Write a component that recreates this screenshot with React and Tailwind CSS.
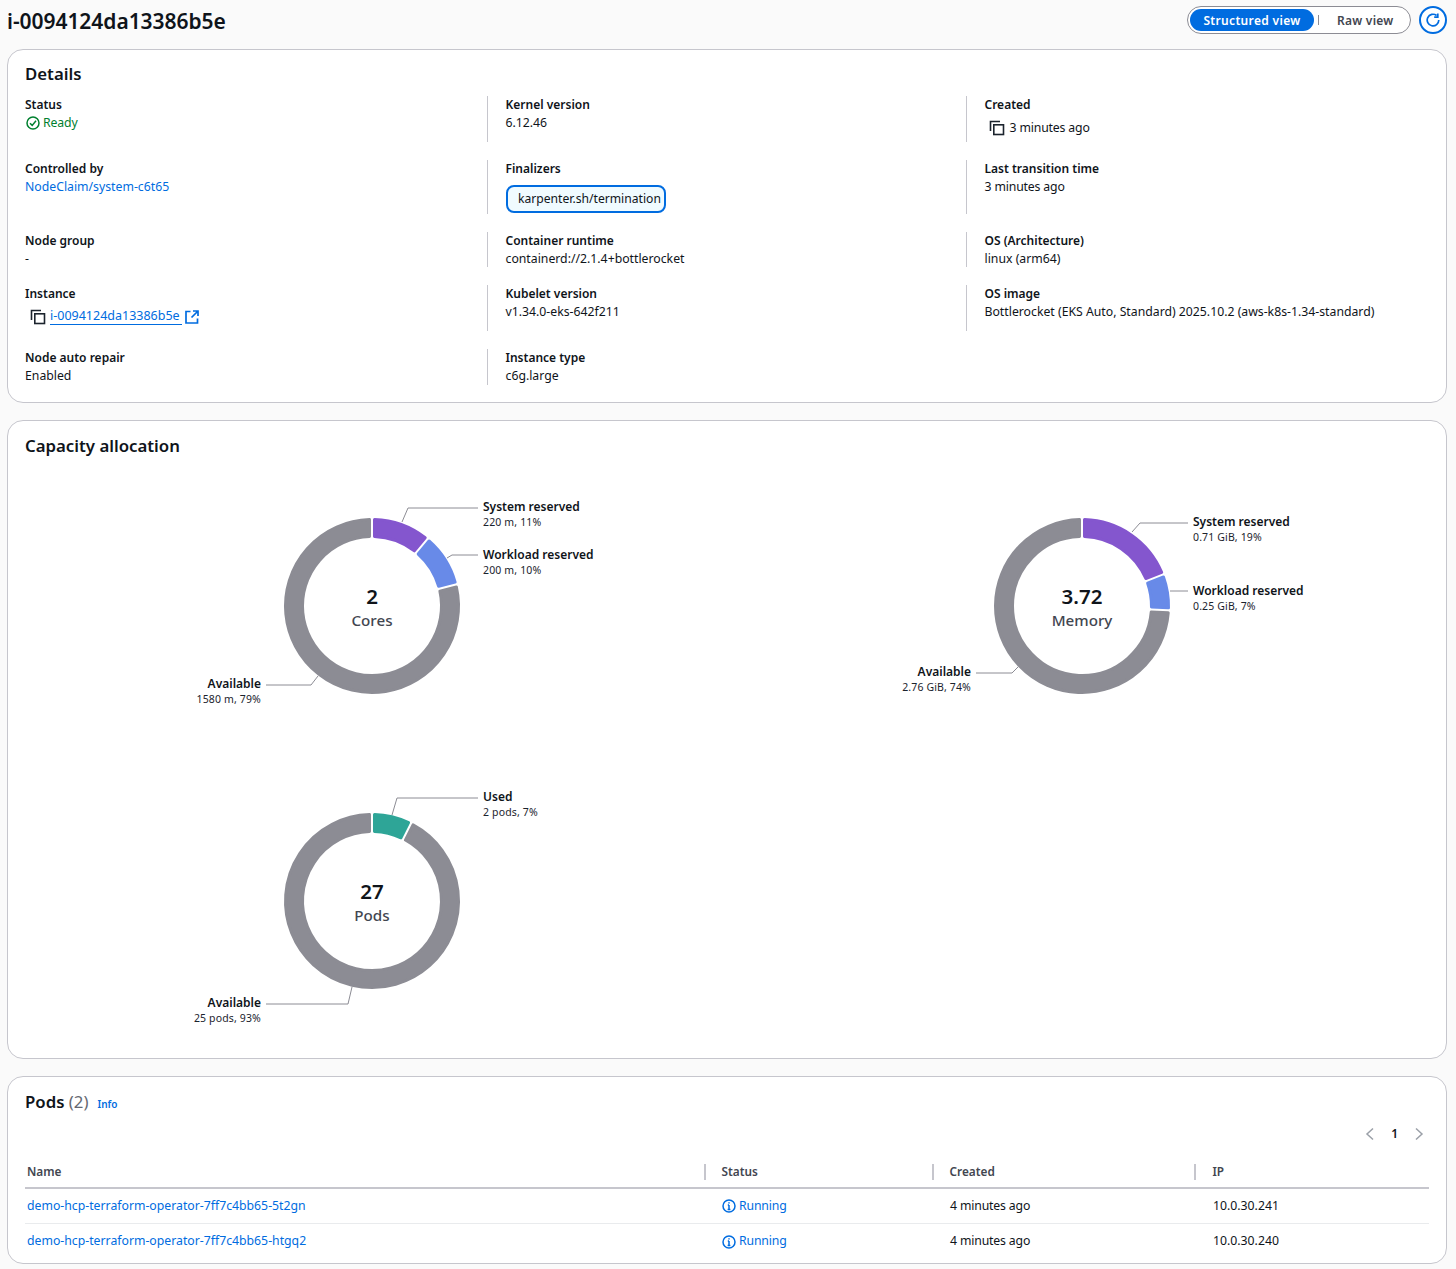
import React from "react";

const BLUE = "#006ce0";

function CopyIcon() {
  return (
    <svg width="16" height="16" viewBox="0 0 16 16" fill="none" stroke="#1b232d" strokeWidth="1.6" className="shrink-0">
      <path d="M1.5 11V1.5H11" />
      <rect x="4.8" y="4.8" width="9.7" height="9.7" />
    </svg>
  );
}
function CheckIcon() {
  return (
    <svg width="14" height="14" viewBox="0 0 14 14" fill="none" stroke="#00802f" strokeWidth="1.5" className="shrink-0">
      <circle cx="7" cy="7" r="6" />
      <path d="M4 7.2l2.2 2.2L10 4.8" />
    </svg>
  );
}
function InfoIcon() {
  return (
    <svg width="14" height="14" viewBox="0 0 14 14" fill="none" stroke={BLUE} strokeWidth="1.5" className="shrink-0">
      <circle cx="7" cy="7" r="6" />
      <path d="M7 6v4.4M5.6 10.4h2.8M5.8 6H7" />
      <path d="M7 3.2v1.4" />
    </svg>
  );
}
function ExternalIcon() {
  return (
    <svg width="14" height="14" viewBox="0 0 14 14" fill="none" stroke={BLUE} strokeWidth="1.7" className="shrink-0">
      <path d="M5.5 1.5H1v11.5h11.5V8.5" />
      <path d="M8 1h5v5M13 1L6.5 7.5" />
    </svg>
  );
}
function RefreshIcon() {
  return (
    <svg width="14" height="14" viewBox="0 0 14 14" fill="none" stroke={BLUE} strokeWidth="1.7">
      <path d="M12.8 7A5.8 5.8 0 1 1 10.6 2.5" />
      <path d="M8.2 4.2h3.6V.6" />
    </svg>
  );
}
function Chevron({ left }) {
  return (
    <svg width="10" height="14" viewBox="0 0 10 14" fill="none" stroke="#9ba0a8" strokeWidth="1.5">
      <path d={left ? "M8 1.5L2 7l6 5.5" : "M2 1.5L8 7l-6 5.5"} />
    </svg>
  );
}

function Label({ children }) {
  return <div className="pt-px text-[12px] leading-4 font-semibold text-[#0f141a]">{children}</div>;
}
function Value({ children, className = "" }) {
  return <div className={`text-[12.25px] leading-5 text-[#0f141a] ${className}`}>{children}</div>;
}
function Cell({ divider, children }) {
  return <div className={divider ? "border-l border-[#c6c6cd] pl-[17.5px]" : ""}>{children}</div>;
}

function Card({ className, children }) {
  return <section className={`rounded-2xl border border-[#c6c6cd] bg-white ${className}`}>{children}</section>;
}

function sector(r0, r1, startFrac, endFrac, gap) {
  const pts = (r, a) => {
    const rad = a - Math.PI / 2;
    return `${(r * Math.cos(rad)).toFixed(2)} ${(r * Math.sin(rad)).toFixed(2)}`;
  };
  const a0 = startFrac * 2 * Math.PI;
  const a1 = endFrac * 2 * Math.PI;
  const large = endFrac - startFrac > 0.5 ? 1 : 0;
  return [
    `M${pts(r1, a0 + gap / r1)}`,
    `A${r1} ${r1} 0 ${large} 1 ${pts(r1, a1 - gap / r1)}`,
    `L${pts(r0, a1 - gap / r0)}`,
    `A${r0} ${r0} 0 ${large} 0 ${pts(r0, a0 + gap / r0)}`,
    "Z",
  ].join(" ");
}

function Donut({ segments, labels, value, unit }) {
  let acc = 0;
  return (
    <svg viewBox="-347 -140 694 279" className="h-[279px] w-[694px]" style={{ fontFamily: "'Noto Sans', sans-serif" }}>
      {segments.map((s, i) => {
        const start = acc;
        acc += s.frac;
        return (
          <path
            key={i}
            d={sector(69.5, 86.5, start, acc, 2.5)}
            fill={s.color}
            stroke={s.color}
            strokeWidth="3"
            strokeLinejoin="round"
          />
        );
      })}
      {labels.map((l, i) => (
        <g key={i}>
          <polyline points={l.line} fill="none" stroke="#8c8c94" strokeWidth="1" />
          <text x={l.x} y={l.y} textAnchor={l.anchor} className="fill-[#0f141a] text-[12px] font-semibold">
            {l.title}
          </text>
          <text x={l.x} y={l.y + 15} textAnchor={l.anchor} className="fill-[#1b232d] text-[10.5px] tracking-[0.15px]">
            {l.sub}
          </text>
        </g>
      ))}
      <text x="0" y="-2" textAnchor="middle" className="fill-[#0f141a] text-[20.5px] font-semibold">
        {value}
      </text>
      <text x="0" y="20" textAnchor="middle" className="fill-[#424650] text-[15.2px] font-medium">
        {unit}
      </text>
    </svg>
  );
}

const GRAY = "#8c8c94";
const PURPLE = "#8456ce";
const PERI = "#688ae8";
const TEAL = "#2ea597";

const Link = ({ children, className = "" }) => <span className={`text-[#006ce0] ${className}`}>{children}</span>;

function TH({ children, divider, className = "pl-[16px]" }) {
  return (
    <div className={`flex h-[16px] items-center text-[11.8px] font-semibold text-[#424650] ${divider ? `border-l-2 border-[#c6c6cd] ${className}` : "pl-[2px]"}`}>
      {children}
    </div>
  );
}

function Row({ name, ip, last }) {
  return (
    <div className={`grid h-[35px] grid-cols-[678.5px_228px_262px_1fr] items-center text-[12.25px] text-[#0f141a] ${last ? "" : "border-b border-[#e9ebed]"}`}>
      <div className="pl-[2px]"><Link>{name}</Link></div>
      <div className="flex items-center gap-[3px] pl-[18.5px]"><InfoIcon /><Link className="tracking-[-0.15px]">Running</Link></div>
      <div className="pl-[18.5px] tracking-[-0.15px]">4 minutes ago</div>
      <div className="pl-[19.5px]">{ip}</div>
    </div>
  );
}

export default function App() {
  return (
    <div className="min-h-[1269px] bg-[#fafafa] pl-[7px] pr-[9px]" style={{ fontFamily: "'Noto Sans', sans-serif" }}>
      <header className="flex h-[49px] items-start justify-between">
        <h1 className="pt-[5px] text-[21px] leading-[32px] font-semibold tracking-[-0.05px] text-[#0f141a]">i-0094124da13386b5e</h1>
        <div className="mt-[6px] flex items-center gap-2">
          <div className="flex h-[28px] w-[224px] items-center rounded-full border border-[#8c8c94] bg-white pl-[2px]">
            <div className="flex h-[22px] w-[124px] items-center justify-center rounded-full bg-[#006ce0] pt-px text-[12px] font-semibold tracking-[0.33px] text-white">Structured view</div>
            <div className="ml-[4px] h-[10px] w-px bg-[#8c8c94]" />
            <div className="ml-[18px] pt-px text-[12px] font-semibold tracking-[0.25px] text-[#424650]">Raw view</div>
          </div>
          <div className="flex h-[28px] w-[28px] items-center justify-center rounded-full border-2 border-[#006ce0] bg-white"><RefreshIcon /></div>
        </div>
      </header>

      <Card className="h-[354px] px-[17px] pt-[13px]">
        <h2 className="text-[16.8px] leading-[22px] font-semibold text-[#0f141a]">Details</h2>
        <div className="mt-[11px] grid grid-cols-[462px_479px_1fr] grid-rows-[46px_54px_35px_46px_36px] gap-y-[18px]">
          <Cell>
            <Label>Status</Label>
            <div className="flex items-center gap-[3px] pl-px text-[12.25px] leading-5 tracking-[-0.1px] text-[#00802f]"><CheckIcon />Ready</div>
          </Cell>
          <Cell divider><Label>Kernel version</Label><Value>6.12.46</Value></Cell>
          <Cell divider>
            <Label>Created</Label>
            <div className="mt-[5px] flex items-center gap-[5px] pl-[4px]"><CopyIcon /><Value className="tracking-[-0.15px]">3 minutes ago</Value></div>
          </Cell>

          <Cell><Label>Controlled by</Label><Value><Link>NodeClaim/system-c6t65</Link></Value></Cell>
          <Cell divider>
            <Label>Finalizers</Label>
            <div className="mt-[8px] flex h-[28px] w-[160.5px] items-center rounded-lg border-2 border-[#006ce0] bg-[#f0fbff] pl-[10.5px] text-[12.15px] whitespace-nowrap text-[#0f141a]">karpenter.sh/termination</div>
          </Cell>
          <Cell divider><Label>Last transition time</Label><Value className="tracking-[-0.15px]">3 minutes ago</Value></Cell>

          <Cell><Label>Node group</Label><Value>-</Value></Cell>
          <Cell divider><Label>Container runtime</Label><Value>containerd://2.1.4+bottlerocket</Value></Cell>
          <Cell divider><Label>OS (Architecture)</Label><Value>linux (arm64)</Value></Cell>

          <Cell>
            <Label>Instance</Label>
            <div className="mt-[6px] flex items-center pl-[5px]">
              <CopyIcon />
              <span className="ml-[4px] border-b border-[#006ce0] pr-[2px] text-[12.5px] leading-[16px] text-[#006ce0]">i-0094124da13386b5e</span>
              <span className="ml-[3px]"><ExternalIcon /></span>
            </div>
          </Cell>
          <Cell divider><Label>Kubelet version</Label><Value>v1.34.0-eks-642f211</Value></Cell>
          <Cell divider><Label>OS image</Label><Value>Bottlerocket (EKS Auto, Standard) 2025.10.2 (aws-k8s-1.34-standard)</Value></Cell>

          <Cell><Label>Node auto repair</Label><Value>Enabled</Value></Cell>
          <Cell divider><Label>Instance type</Label><Value>c6g.large</Value></Cell>
        </div>
      </Card>

      <Card className="mt-[17px] h-[639px] px-[17px] pt-[14px]">
        <h2 className="text-[16.8px] leading-[22px] font-semibold text-[#0f141a]">Capacity allocation</h2>
        <div className="mt-[9px] grid grid-cols-2 gap-4">
          <Donut
            value="2"
            unit="Cores"
            segments={[
              { frac: 0.11, color: PURPLE },
              { frac: 0.1, color: PERI },
              { frac: 0.79, color: GRAY },
            ]}
            labels={[
              { title: "System reserved", sub: "220 m, 11%", x: 111, y: -95, line: "30,-84 36,-98 106,-98" },
              { title: "Workload reserved", sub: "200 m, 10%", x: 111, y: -47, line: "75,-48 80,-51 106,-51" },
              { title: "Available", sub: "1580 m, 79%", x: -111, y: 82, anchor: "end", line: "-54,70 -61,79 -106,79" },
            ]}
          />
          <Donut
            value="3.72"
            unit="Memory"
            segments={[
              { frac: 0.191, color: PURPLE },
              { frac: 0.067, color: PERI },
              { frac: 0.742, color: GRAY },
            ]}
            labels={[
              { title: "System reserved", sub: "0.71 GiB, 19%", x: 111, y: -80, line: "50,-74 58,-83 106,-83" },
              { title: "Workload reserved", sub: "0.25 GiB, 7%", x: 111, y: -11, line: "88,-15 106,-15" },
              { title: "Available", sub: "2.76 GiB, 74%", x: -111, y: 70, anchor: "end", line: "-64,61 -70,67 -106,67" },
            ]}
          />
          <Donut
            value="27"
            unit="Pods"
            segments={[
              { frac: 2 / 27, color: TEAL },
              { frac: 25 / 27, color: GRAY },
            ]}
            labels={[
              { title: "Used", sub: "2 pods, 7%", x: 111, y: -100, line: "20,-86 25,-103 106,-103" },
              { title: "Available", sub: "25 pods, 93%", x: -111, y: 106, anchor: "end", line: "-20,86 -24,103 -106,103" },
            ]}
          />
        </div>
      </Card>

      <Card className="mt-[17px] h-[188px] px-[17px] pt-[14px]">
        <div className="flex items-baseline gap-[9px]">
          <h2 className="text-[16.8px] leading-[22px] font-semibold text-[#0f141a]">Pods <span className="font-normal text-[#656871]">(2)</span></h2>
          <Link className="text-[10px] font-semibold">Info</Link>
        </div>
        <div className="mt-[11px] flex h-[20px] items-center justify-end gap-[16px] pr-[5px]">
          <Chevron left />
          <span className="text-[12px] font-semibold text-[#0f141a]">1</span>
          <Chevron />
        </div>
        <div className="mt-[20px] grid grid-cols-[678.5px_228px_262px_1fr] border-b-2 border-[#c6c6cd] pb-[7px]">
          <TH>Name</TH>
          <TH divider>Status</TH>
          <TH divider>Created</TH>
          <TH divider className="pl-[17px]">IP</TH>
        </div>
        <Row name="demo-hcp-terraform-operator-7ff7c4bb65-5t2gn" ip="10.0.30.241" />
        <Row name="demo-hcp-terraform-operator-7ff7c4bb65-htgq2" ip="10.0.30.240" last />
      </Card>
    </div>
  );
}
